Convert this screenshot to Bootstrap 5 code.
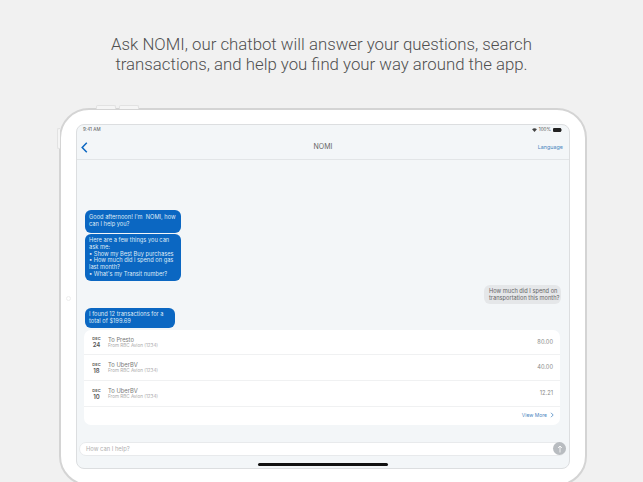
<!doctype html>
<html lang="en"><head><meta charset="utf-8"><title>NOMI</title>
<link rel="stylesheet" href="https://cdn.jsdelivr.net/npm/bootstrap@5.3.0/dist/css/bootstrap.min.css">
<style>
html,body{height:482px;overflow:hidden}
body{background:#f1f1f1;font-family:"Inter","Liberation Sans",sans-serif;color:#555}
.headline{height:108px;padding-top:35px;font-family:"Roboto",sans-serif;font-weight:300;font-size:16.8px;line-height:19.5px;color:#4f4f4f;text-align:center;margin:0}
.device{position:relative;width:528px;height:378px;margin-left:59px;background:#fff;border:2px solid #d4d4d4;border-radius:30px;padding:14px 15px}
.hw{position:absolute;background:#f5f5f5;border:1px solid #e2e2e2}
.hw-a{left:35px;top:-5px;width:20px;height:4px;border-bottom:0;border-radius:2px 2px 0 0}
.hw-b{left:58px;top:-5px;width:20px;height:4px;border-bottom:0;border-radius:2px 2px 0 0}
.hw-c{left:-4px;top:18px;width:3px;height:21px;border-right:0;border-radius:2px 0 0 2px}
.screen{width:494px;height:345px;background:#f3f6f8;border:1px solid #dcdee0;border-radius:8px;overflow:hidden;position:relative}
.status{height:10px;padding:0 7px 0 6px;font-size:4.6px;line-height:10px;color:#555}
.stat-r{gap:2px}
.topbar{height:25px;border-bottom:1px solid #e2e5e7;padding:0 6px 0 4px;position:relative}
.topbar .ttl{font-size:7px;color:#666}
.topbar .lang{font-size:5.4px;color:#4a86c0}
.chat{height:283px;padding:0 8px 0 8px}
.msg{font-size:5.7px;line-height:6.9px;border-radius:6px;white-space:nowrap}
.bot{background:#0b67c2;color:#dfeaf6;width:96px;margin-bottom:1px;padding:4.5px 4px}
.bot-mid{padding:3px 4px;margin-bottom:4px}
.me{background:#e5e7e9;color:#666;width:77px;margin:0 0 4px auto;padding:2.6px 5px}
.bot-last{width:90px;padding:3px 4px;margin-bottom:2px}
.txcard{background:#fff;border-radius:7px;margin:0 0 18px -1px;height:95px;width:476px}
.txrow{height:26px;border-bottom:1px solid #f0f1f2;padding:0 7px 0 5px;gap:4px}
.txrow:first-child{height:25px}
.dt{width:15px;text-align:center;color:#555}
.dt b{display:block;font-size:4px;line-height:5px;font-weight:600}
.dt span{display:block;font-size:6px;line-height:7px;font-weight:600}
.nm{font-size:5.8px;line-height:7px;color:#777}
.fr{font-size:4.6px;line-height:6px;color:#aaa}
.amt{font-size:5.7px;color:#888}
.more{font-size:5px;color:#4a86c0;padding:4.5px 6px 0 0;gap:3px}
.inp{position:absolute;left:2px;right:3px;top:317px;height:14px;background:#fff;border:1px solid #e8eaec;border-radius:7px;font-size:5.8px;line-height:12px;padding-left:6px;color:#b0b0b0}
.send{position:absolute;right:-1px;top:-1px;width:13px;height:13px;border-radius:50%;background:#b8bcc0}
.homebar{position:absolute;left:181px;top:338px;width:130px;height:3px;border-radius:2px;background:#111}
.faint{position:absolute;left:5px;top:186px;width:5px;height:5px;border-radius:50%;border:1px solid #eee}
</style></head>
<body>
<p class="headline">Ask NOMI, our chatbot will answer your questions, search<br>transactions, and help you find your way around the app.</p>
<div class="device">
<div class="hw hw-a"></div><div class="hw hw-b"></div><div class="hw hw-c"></div>
<div class="faint"></div>
<div class="screen">
<div class="status d-flex justify-content-between align-items-center">
<span>9:41 AM</span>
<span class="d-flex align-items-center stat-r">
<svg width="5" height="4" viewBox="0 0 6 5"><path d="M0 1.5C1.7 0 4.3 0 6 1.5L3 5z" fill="#444"/></svg>
<span>100%</span>
<svg width="9" height="4" viewBox="0 0 9 4"><rect width="8.2" height="4" rx="1" fill="#222"/><rect x="8.4" y="1.2" width=".6" height="1.6" fill="#555"/></svg>
</span></div>
<div class="topbar d-flex justify-content-between align-items-center">
<svg width="7" height="11" viewBox="0 0 7 11"><path d="M5.8 .8 1.2 5.5l4.6 4.7" fill="none" stroke="#0b67c2" stroke-width="1.5"/></svg>
<span class="ttl position-absolute top-50 start-50 translate-middle">NOMI</span>
<span class="lang">Language</span>
</div>
<div class="chat d-flex flex-column justify-content-end">
<div class="msg bot">Good afternoon! I'm&nbsp; NOMI, how<br>can I help you?</div>
<div class="msg bot bot-mid">Here are a few things you can<br>ask me:<br>• Show my Best Buy purchases<br>• How much did i spend on gas<br>last month?<br>• What's my Transit number?</div>
<div class="msg me">How much did I spend on<br>transportation this month?</div>
<div class="msg bot bot-last">I found 12 transactions for a<br>total of $199.69</div>
<div class="txcard">
<div class="txrow d-flex align-items-center"><div class="dt"><b>DEC</b><span>24</span></div><div class="flex-grow-1"><div class="nm">To Presto</div><div class="fr">From RBC Avion (1234)</div></div><div class="amt">80.00</div></div>
<div class="txrow d-flex align-items-center"><div class="dt"><b>DEC</b><span>18</span></div><div class="flex-grow-1"><div class="nm">To UberBV</div><div class="fr">From RBC Avion (1234)</div></div><div class="amt">40.00</div></div>
<div class="txrow d-flex align-items-center"><div class="dt"><b>DEC</b><span>10</span></div><div class="flex-grow-1"><div class="nm">To UberBV</div><div class="fr">From RBC Avion (1234)</div></div><div class="amt">12.21</div></div>
<div class="more d-flex justify-content-end align-items-center"><span>View More</span><svg width="4" height="6" viewBox="0 0 4 6"><path d="M1 .8 3.2 3 1 5.2" fill="none" stroke="#4a86c0" stroke-width=".8"/></svg></div>
</div>
</div>
<div class="inp">How can I help?
<div class="send d-flex align-items-center justify-content-center"><svg width="6" height="8" viewBox="0 0 6 8"><path d="M3 7.5V1M1 3 3 1l2 2" fill="none" stroke="#fff" stroke-width=".8"/></svg></div></div>
<div class="homebar"></div>
</div>
</div>
</body></html>
